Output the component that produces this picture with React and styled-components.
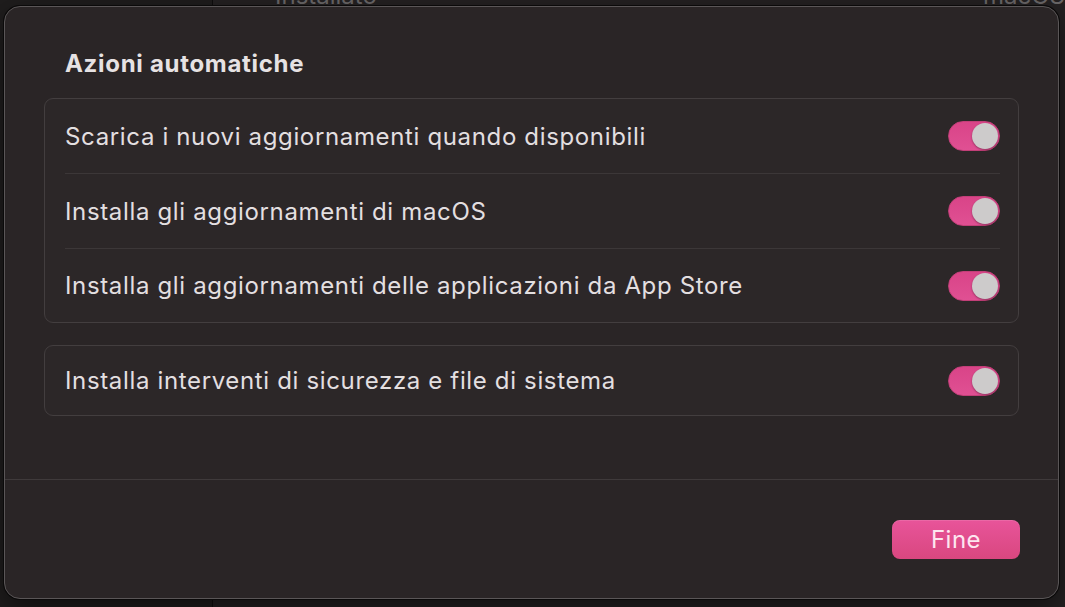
import React, { useState } from "react";
import styled, { createGlobalStyle } from "styled-components";

const Global = createGlobalStyle`
  html, body { margin: 0; padding: 0; background: #1d1b1b; }
  body { font-family: Inter, "Noto Sans", "Liberation Sans", sans-serif; -webkit-font-smoothing: antialiased; }
  *, *::before, *::after { box-sizing: border-box; }
`;

const Screen = styled.div`
  position: relative;
  width: 1065px;
  height: 607px;
  overflow: hidden;
  background: #1e1c1c;
  padding: 6px 6px 8px 4px;
`;

/* window behind the sheet */
const Behind = styled.div`
  position: absolute;
  inset: 0;
  display: grid;
  grid-template-columns: 213px 1fr;
`;

const BehindSidebar = styled.div`
  background: #1f1d1d;
  border-right: 1px solid #0f0e0e;
`;

const BehindMain = styled.div`
  display: flex;
  justify-content: space-between;
  padding: 0 0 0 62px;
  background: #242122;
`;

const BehindText = styled.span`
  font-size: 24px;
  line-height: 24px;
  margin-top: -16px;
  color: #6b6869;
`;

const Sheet = styled.div`
  position: relative;
  height: 100%;
  display: flex;
  flex-direction: column;
  background: #2a2526;
  border: 1px solid #5a5657;
  border-radius: 16px;
  box-shadow: 0 0 0 1px #0b0a0a, 0 10px 30px rgba(0, 0, 0, 0.5);
`;

const Content = styled.div`
  flex: 1;
  display: flex;
  flex-direction: column;
  gap: 22px;
  padding: 43px 39px 0;
`;

const Title = styled.h2`
  margin: 0 0 -2px 21px;
  font-size: 24px;
  line-height: 28px;
  font-weight: 700;
  letter-spacing: 0.7px;
  color: #e6e2e3;
`;

const Group = styled.div`
  display: flex;
  flex-direction: column;
  background: #2c2728;
  border: 1px solid #433e3f;
  border-radius: 9px;
`;

const Row = styled.div`
  display: flex;
  align-items: center;
  justify-content: space-between;
  height: ${(p) => p.$h || 74}px;
  margin: 0 18px 0 20px;
  border-top: ${(p) => (p.$first ? "none" : "1px solid #3c3738")};
`;

const Label = styled.span`
  font-size: 24px;
  color: #e3dfe0;
  letter-spacing: 0.65px;
`;

const Track = styled.button`
  position: relative;
  width: 52px;
  height: 30px;
  padding: 0;
  border: 1px solid #c23f78;
  border-radius: 15px;
  background: linear-gradient(180deg, #d94488 0%, #e05093 100%);
  cursor: pointer;
`;

const Knob = styled.span`
  position: absolute;
  top: 1px;
  left: ${(p) => (p.$on ? "23px" : "1px")};
  width: 26px;
  height: 26px;
  border-radius: 50%;
  background: #cdcbcb;
  box-shadow: 0 1px 2px rgba(0, 0, 0, 0.35);
`;

const Divider = styled.div`
  height: 1px;
  background: #3f3a3b;
`;

const Footer = styled.div`
  display: flex;
  justify-content: flex-end;
  padding: 40px 38px 39px;
`;

const Primary = styled.button`
  width: 128px;
  height: 39px;
  border: none;
  border-radius: 8px;
  background: linear-gradient(180deg, #e8549a 0%, #d9477f 100%);
  color: #fde6f0;
  font-family: inherit;
  font-size: 24px;
  letter-spacing: 0.5px;
  cursor: pointer;
  box-shadow: inset 0 1px 0 rgba(255, 255, 255, 0.12);
`;

function Toggle({ on, onChange }) {
  return (
    <Track type="button" role="switch" aria-checked={on} onClick={() => onChange(!on)}>
      <Knob $on={on} />
    </Track>
  );
}

const mainRows = [
  "Scarica i nuovi aggiornamenti quando disponibili",
  "Installa gli aggiornamenti di macOS",
  "Installa gli aggiornamenti delle applicazioni da App Store",
];

export default function App() {
  const [state, setState] = useState([true, true, true, true]);
  const set = (i) => (v) => setState((s) => s.map((x, j) => (j === i ? v : x)));

  return (
    <>
      <Global />
      <Screen>
        <Behind>
          <BehindSidebar />
          <BehindMain>
            <BehindText>Installato</BehindText>
            <BehindText>macOS</BehindText>
          </BehindMain>
        </Behind>
        <Sheet>
          <Content>
            <Title>Azioni automatiche</Title>
            <Group>
              {mainRows.map((t, i) => (
                <Row key={t} $first={i === 0} $h={i === 1 ? 75 : 74}>
                  <Label>{t}</Label>
                  <Toggle on={state[i]} onChange={set(i)} />
                </Row>
              ))}
            </Group>
            <Group>
              <Row $first $h={69}>
                <Label>Installa interventi di sicurezza e file di sistema</Label>
                <Toggle on={state[3]} onChange={set(3)} />
              </Row>
            </Group>
          </Content>
          <Divider />
          <Footer>
            <Primary>Fine</Primary>
          </Footer>
        </Sheet>
      </Screen>
    </>
  );
}
